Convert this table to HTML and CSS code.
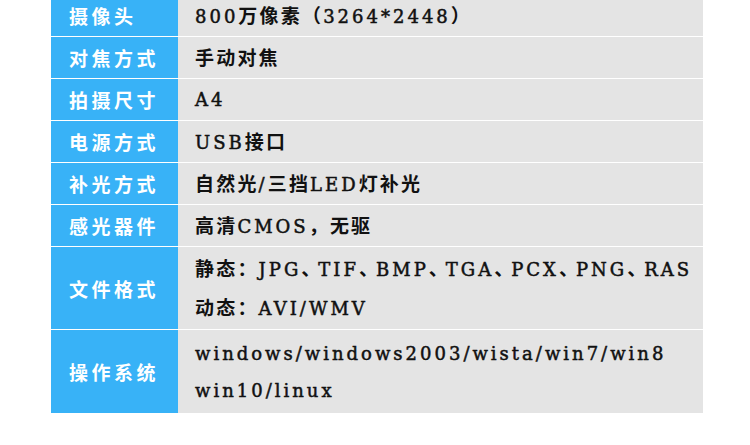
FILE: index.html
```html
<!DOCTYPE html>
<html lang="zh-CN">
<head>
<meta charset="utf-8">
<title>产品参数</title>
<link rel="stylesheet" href="styles.css">
</head>
<body>
<div class="spec">
  <div class="row"><div class="label">摄像头</div><div class="value"><p>800<span class="cjk">万像素（</span>3264*2448<span class="cjk">）</span></p></div></div>
  <div class="row"><div class="label">对焦方式</div><div class="value"><p><span class="cjk">手动对焦</span></p></div></div>
  <div class="row"><div class="label">拍摄尺寸</div><div class="value"><p>A4</p></div></div>
  <div class="row"><div class="label">电源方式</div><div class="value"><p>USB<span class="cjk">接口</span></p></div></div>
  <div class="row"><div class="label">补光方式</div><div class="value"><p><span class="cjk">自然光</span>/<span class="cjk">三挡</span>LED<span class="cjk">灯补光</span></p></div></div>
  <div class="row"><div class="label">感光器件</div><div class="value"><p><span class="cjk">高清</span>CMOS<span class="cjk">，无驱</span></p></div></div>
  <div class="row tall"><div class="label">文件格式</div><div class="value"><p><span class="cjk">静态：</span>JPG<span class="cjk pn">、</span>TIF<span class="cjk pn">、</span>BMP<span class="cjk pn">、</span>TGA<span class="cjk pn">、</span>PCX<span class="cjk pn">、</span>PNG<span class="cjk pn">、</span>RAS</p><p><span class="cjk">动态：</span>AVI/WMV</p></div></div>
  <div class="row tall last"><div class="label">操作系统</div><div class="value"><p>windows/windows2003/wista/win7/win8</p><p>win10/linux</p></div></div>
</div>
</body>
</html>
```

FILE: styles.css
```css
html, body {
  margin: 0;
  padding: 0;
  background: #ffffff;
}

.spec {
  width: 652px;
  margin: -5px 0 0 51px;
  display: flex;
  flex-direction: column;
  gap: 1px;
}

.row {
  display: grid;
  grid-template-columns: 127px 525px;
  height: 41px;
}

.row.tall {
  height: 82px;
}

.row.tall.last {
  height: 83px;
}

.label {
  background: #38b2f7;
  color: #ffffff;
  font-family: "Noto Sans CJK SC", sans-serif;
  font-weight: 700;
  font-size: 19px;
  letter-spacing: 3.5px;
  display: flex;
  align-items: center;
  padding-left: 18px;
}

.value {
  background: #e4e4e4;
  color: #111111;
  font-family: "DejaVu Serif", serif;
  font-weight: 400;
  font-size: 18px;
  letter-spacing: 3px;
  line-height: 37px;
  -webkit-text-stroke: 0.5px #111111;
  display: flex;
  flex-direction: column;
  justify-content: center;
  padding-left: 17px;
  white-space: nowrap;
}

.value p {
  margin: 0;
}

.cjk {
  font-family: "Noto Sans CJK SC", sans-serif;
  font-weight: 700;
  font-size: 19px;
  letter-spacing: 2.2px;
  -webkit-text-stroke: 0;
}

.pn {
  letter-spacing: -2px;
}
```
